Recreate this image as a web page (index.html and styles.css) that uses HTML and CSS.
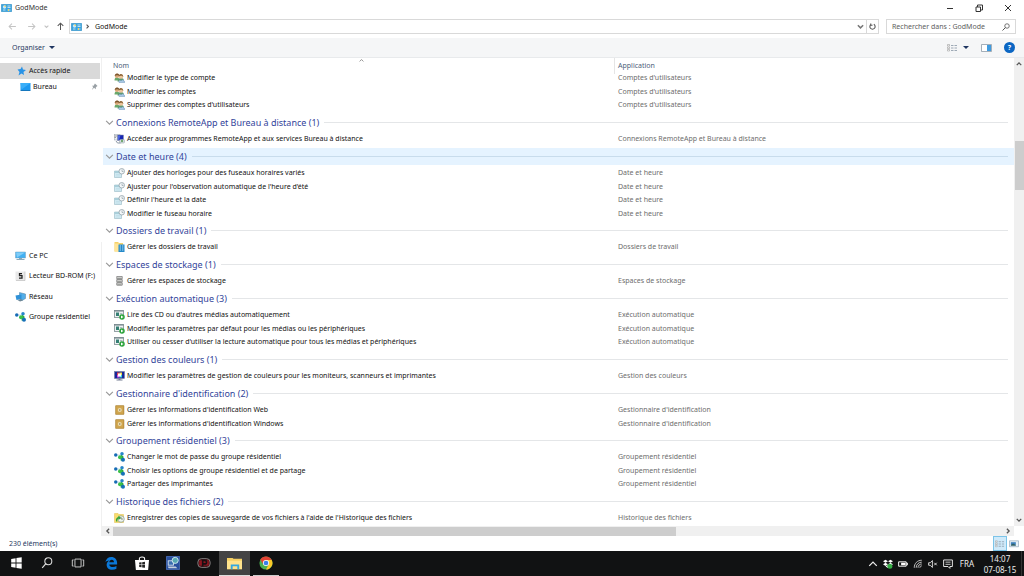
FILE: index.html
```html
<!DOCTYPE html>
<html lang="fr">
<head>
<meta charset="utf-8">
<title>GodMode</title>
<link rel="stylesheet" href="styles.css">
</head>
<body>
<svg class="sprite" aria-hidden="true">
  <symbol id="panel" viewBox="0 0 22 16"><rect x=".5" y=".5" width="21" height="15" rx="1" fill="#3aa3dc" stroke="#2b86bd"/><circle cx="7" cy="6" r="3.500" fill="#c5e8fb"/><path d="M7 6V2.500A3.500 3.500 0 0 1 10.500 6z" fill="#f5d35c"/><path d="M13 4h6M13 7h6M4 12h5M13 12h6" stroke="#e6f6ff" stroke-width="1.500"/><path d="M15 10v4" stroke="#f5d35c" stroke-width="2"/></symbol>
  <symbol id="users" viewBox="0 0 22 20"><path d="M1 15c0-5 2-6 5-6s5 2 5 6z" fill="#6aa86a"/><circle cx="6" cy="5.500" r="4.500" fill="#d9a878"/><path d="M1.500 6c0-6 9-7 9 0-2-2-6-2-9 0z" fill="#7a5530"/><path d="M7 17c0-5 3-7 7-7s6 2 6 7z" fill="#5d9a70"/><circle cx="14" cy="7" r="4.500" fill="#ecc59b"/><path d="M9.500 7c0-7 9-7 9 1-2-3-6-3-9-1z" fill="#8a6235"/><path d="M10 19c-2-4 3-6 4-3 2-4 7-2 6 1 3 0 3 2 1 2z" fill="#a9c9e6" stroke="#7297b8"/></symbol>
  <symbol id="remote" viewBox="0 0 22 20"><rect x="1" y="1" width="11" height="11" fill="#e9edf2" stroke="#9ba4ae"/><path d="M1 4h5M1 7h3" stroke="#555"/><rect x="7" y="2" width="12" height="11" fill="#1725b4" stroke="#8a93a3"/><path d="M8 3h5l-3 9H8z" fill="#4b66e0"/><rect x="11" y="11" width="10" height="7" rx="2" fill="#dce3ea" stroke="#8c98a5"/><path d="M4 14l3 4 6 0" stroke="#8c98a5" fill="none" stroke-width="2"/><circle cx="16" cy="14" r="2.500" fill="#74a873"/></symbol>
  <symbol id="clock" viewBox="0 0 22 20"><path d="M1 6h14v13H1z" fill="#cfe8f1" stroke="#86acba"/><path d="M1 6h14v4H1z" fill="#a9ced9"/><path d="M4 13h8M4 16h8" stroke="#b7d8e2"/><circle cx="15.500" cy="6.500" r="5.500" fill="#f3f7f9" stroke="#8f9ea6" stroke-width="1.500"/><path d="M16 3v4h3" stroke="#71818b" fill="none"/></symbol>
  <symbol id="workfolder" viewBox="0 0 22 20"><path d="M1 0h7l2 2h8v17H1z" fill="#f5d268"/><path d="M1 3h9v16H1z" fill="#ffe599"/><rect x="9" y="5" width="12" height="15" fill="#2489c9"/><path d="M12.500 7v11M17.500 7v11" stroke="#e1f3ff" stroke-width="2" stroke-dasharray="2 2"/></symbol>
  <symbol id="storage" viewBox="0 0 22 22"><path d="M5 1h12v20H5z" fill="#b6b6b4"/><path d="M5 1h12v5H5zM5 8h12v5H5zM5 15h12v5H5z" fill="#d8d8d6" stroke="#777" stroke-width="1.500"/><path d="M7 5h7M7 12h7M7 19h7" stroke="#8d938d" stroke-width="1.500"/></symbol>
  <symbol id="autoplay" viewBox="0 0 22 20"><rect x="1" y="1" width="18" height="14" fill="#eef2f2" stroke="#77858a" stroke-width="1.500"/><path d="M1 2h18" stroke="#6b7c82" stroke-width="2"/><path d="M4 5h6v7H4z" fill="#357f74"/><path d="M12 7h5M12 10h4" stroke="#9aabae" stroke-width="1.500"/><circle cx="16" cy="14" r="5.500" fill="#2ca33c"/><path d="M14 11l5 3-5 3z" fill="#fff"/></symbol>
  <symbol id="colors" viewBox="0 0 22 20"><rect x="1" y="1" width="20" height="14" fill="#17259a" stroke="#6d7894"/><path d="M6 3h5v5H6z" fill="#e94343"/><path d="M11 3h5v5h-5z" fill="#f4df3c"/><path d="M6 8h5v5H6z" fill="#d84ee1"/><path d="M11 8h5v5h-5z" fill="#35d3df"/><path d="M8 5h6v6H8z" fill="#fff"/><path d="M9 15h4v2h4v2H5v-2h4z" fill="#777f94"/></symbol>
  <symbol id="vault" viewBox="0 0 22 20"><rect x="3" y="1" width="17" height="18" rx="1" fill="#c79b45" stroke="#a98338"/><path d="M5 3h13v14H5z" fill="#d0a64f"/><circle cx="11.500" cy="10" r="4" fill="#ecdcb0"/><circle cx="11.500" cy="10" r="1.500" fill="#8c7648"/></symbol>
  <symbol id="homegroup" viewBox="0 0 22 20"><path d="M4 6h12" stroke="#91bddd"/><path d="M14 5l5 4v8h-6z" fill="#2dac3c"/><circle cx="3.500" cy="6" r="3.500" fill="#176bb5"/><circle cx="16" cy="3.500" r="3.500" fill="#2585ca"/><circle cx="12" cy="10.500" r="4" fill="#3cc04a"/><circle cx="18" cy="15.500" r="4" fill="#1670b8"/></symbol>
  <symbol id="history" viewBox="0 0 22 20"><path d="M1 1h7l2 2h9v16H1z" fill="#f8dc6d" stroke="#e2bf48"/><circle cx="14" cy="12" r="6.500" fill="#edf3ed" stroke="#8b9b8c" stroke-width="1.500"/><path d="M14 8v4h4" stroke="#697769" fill="none" stroke-width="1.500"/><path d="M4 17c-1-5 1-8 5-9V5l5 5-5 4v-3c-2 1-3 3-2 6z" fill="#35a43a"/></symbol>
  <symbol id="arrow" viewBox="0 0 16 16"><path d="M14 8H2M7 3L2 8l5 5" fill="none" stroke="currentColor" stroke-width="1.800"/></symbol>
  <symbol id="chevron" viewBox="0 0 16 16"><path d="M2 5l6 6 6-6" fill="none" stroke="currentColor" stroke-width="2"/></symbol>
  <symbol id="bold-chevron" viewBox="0 0 16 16"><path d="M2 5l6 6 6-6" fill="none" stroke="currentColor" stroke-width="3.500"/></symbol>
  <symbol id="lens" viewBox="0 0 16 16"><circle cx="10" cy="6" r="4.500" fill="none" stroke="currentColor" stroke-width="1.600"/><path d="M7 9l-6 6" stroke="currentColor" stroke-width="2"/></symbol>
  <symbol id="details" viewBox="0 0 22 16"><path d="M1 1h4v3H1zM1 6h4v3H1zM1 11h4v3H1z" fill="#fff" stroke="#8c8c8c"/><path d="M8 3h5M15 3h5M8 8h5M15 8h5M8 13h5M15 13h5" stroke="#8090a0" stroke-width="1.500"/></symbol>
</svg>

<header class="titlebar">
  <svg class="panel-icon"><use href="#panel"/></svg>
  <h1>GodMode</h1>
  <div class="controls">
    <button aria-label="Réduire"><svg viewBox="0 0 10 10"><path d="M2 5.500h6" stroke="currentColor"/></svg></button>
    <button aria-label="Restaurer"><svg viewBox="0 0 10 10"><path d="M2 4h4.500v4.500H2zM3.500 4V2H8.500v5H6.500" fill="none" stroke="currentColor"/></svg></button>
    <button aria-label="Fermer"><svg viewBox="0 0 10 10"><path d="M2 2l6 6M8 2l-6 6" stroke="currentColor"/></svg></button>
  </div>
</header>

<div class="navbar">
  <button class="nav-button faded" aria-label="Précédent"><svg><use href="#arrow"/></svg></button>
  <button class="nav-button faded forward" aria-label="Suivant"><svg><use href="#arrow"/></svg></button>
  <button class="nav-button faded small" aria-label="Emplacements récents"><svg><use href="#bold-chevron"/></svg></button>
  <button class="nav-button up" aria-label="Dossier parent"><svg><use href="#arrow"/></svg></button>
  <div class="address">
    <svg class="panel-icon"><use href="#panel"/></svg>
    <svg class="crumb"><use href="#bold-chevron"/></svg>
    <span class="path">GodMode</span>
    <button aria-label="Historique des adresses"><svg><use href="#bold-chevron"/></svg></button>
    <button class="refresh" aria-label="Actualiser"><svg viewBox="0 0 16 16"><path d="M5 3a6 6 0 1 0 6 0M4 1v4h4" fill="none" stroke="currentColor" stroke-width="2.500"/></svg></button>
  </div>
  <div class="search">
    <input type="text" aria-label="Rechercher" placeholder="Rechercher dans : GodMode">
    <svg><use href="#lens"/></svg>
  </div>
</div>

<div class="toolbar">
  <button class="organize">Organiser <span class="caret"></span></button>
  <div class="tools">
    <button class="views" aria-label="Affichage"><svg><use href="#details"/></svg><span class="caret"></span></button>
    <button class="pane" aria-label="Volet de visualisation"><svg viewBox="0 0 22 16"><path d="M1 1h20v14H1z" fill="#fff" stroke="#8796a3" stroke-width="1.500"/><path d="M12 2h8v12h-8z" fill="#3f9be0"/></svg></button>
    <button class="help" aria-label="Aide">?</button>
  </div>
</div>

<div class="main">
  <nav class="side">
    <ul class="quick">
      <li><a href="#" class="selected"><svg viewBox="0 0 20 20"><path d="M11 1l2 6 6 1-5 4 1 6-5-3-6 4 2-7-4-5 6-1z" fill="#2993e6"/></svg>Accès rapide</a></li>
      <li><a href="#" class="child"><svg viewBox="0 0 22 18"><path d="M1 1h20v14H1z" fill="#1c98f0"/><path d="M1 15h20v2H1z" fill="#1577bd"/><path d="M1 1h20L3 14z" fill="#3aaef8"/></svg>Bureau
        <svg class="pin" viewBox="0 0 16 16"><path d="M9 1l6 6-2 1-2 2 0 4-4-3-5 5 3-7-3-3h4l2-3z" fill="#99a0a5"/></svg></a></li>
    </ul>
    <ul class="places">
      <li><a href="#"><svg viewBox="0 0 22 20"><path d="M1 2h20v12H1z" fill="#42b0f2" stroke="#77a3bf"/><path d="M2 3h18L4 13z" fill="#80cdf8"/><path d="M8 14h6v2h5v2H3v-2h5z" fill="#8baabb"/></svg>Ce PC</a></li>
      <li><a href="#"><svg viewBox="0 0 22 20"><path d="M1 1h19v18H1z" fill="#e9e9e9"/><path d="M20 1v18H2" fill="none" stroke="#aaa"/><path d="M14 5H9v4h5v5H8" fill="none" stroke="#222" stroke-width="2.500"/></svg>Lecteur BD-ROM (F:)</a></li>
      <li><a href="#"><svg viewBox="0 0 22 20"><path d="M9 1l12 3v9l-7 4-5-4z" fill="#54aee8" stroke="#527f9c"/><path d="M1 7l12-2v9L3 16z" fill="#2f91d7"/><path d="M5 16l7-2 4 3-6 2z" fill="#6d8796"/></svg>Réseau</a></li>
      <li><a href="#"><svg><use href="#homegroup"/></svg>Groupe résidentiel</a></li>
    </ul>
  </nav>

  <div class="content">
    <div class="list">
      <svg class="sort"><use href="#chevron"/></svg>
      <table>
        <thead><tr><th class="name">Nom</th><th class="app">Application</th></tr></thead>
        <tbody>
          <tr><td><svg><use href="#users"/></svg>Modifier le type de compte</td><td>Comptes d'utilisateurs</td></tr>
          <tr><td><svg><use href="#users"/></svg>Modifier les comptes</td><td>Comptes d'utilisateurs</td></tr>
          <tr><td><svg><use href="#users"/></svg>Supprimer des comptes d'utilisateurs</td><td>Comptes d'utilisateurs</td></tr>
        </tbody>
        <tbody>
          <tr class="group"><th colspan="2"><div><svg><use href="#chevron"/></svg>Connexions RemoteApp et Bureau à distance (1)</div></th></tr>
          <tr><td><svg><use href="#remote"/></svg>Accéder aux programmes RemoteApp et aux services Bureau à distance</td><td>Connexions RemoteApp et Bureau à distance</td></tr>
        </tbody>
        <tbody>
          <tr class="group hover"><th colspan="2"><div><svg><use href="#chevron"/></svg>Date et heure (4)</div></th></tr>
          <tr><td><svg><use href="#clock"/></svg>Ajouter des horloges pour des fuseaux horaires variés</td><td>Date et heure</td></tr>
          <tr><td><svg><use href="#clock"/></svg>Ajuster pour l'observation automatique de l'heure d'été</td><td>Date et heure</td></tr>
          <tr><td><svg><use href="#clock"/></svg>Définir l'heure et la date</td><td>Date et heure</td></tr>
          <tr><td><svg><use href="#clock"/></svg>Modifier le fuseau horaire</td><td>Date et heure</td></tr>
        </tbody>
        <tbody>
          <tr class="group"><th colspan="2"><div><svg><use href="#chevron"/></svg>Dossiers de travail (1)</div></th></tr>
          <tr><td><svg><use href="#workfolder"/></svg>Gérer les dossiers de travail</td><td>Dossiers de travail</td></tr>
        </tbody>
        <tbody>
          <tr class="group"><th colspan="2"><div><svg><use href="#chevron"/></svg>Espaces de stockage (1)</div></th></tr>
          <tr><td><svg><use href="#storage"/></svg>Gérer les espaces de stockage</td><td>Espaces de stockage</td></tr>
        </tbody>
        <tbody>
          <tr class="group"><th colspan="2"><div><svg><use href="#chevron"/></svg>Exécution automatique (3)</div></th></tr>
          <tr><td><svg><use href="#autoplay"/></svg>Lire des CD ou d'autres médias automatiquement</td><td>Exécution automatique</td></tr>
          <tr><td><svg><use href="#autoplay"/></svg>Modifier les paramètres par défaut pour les médias ou les périphériques</td><td>Exécution automatique</td></tr>
          <tr><td><svg><use href="#autoplay"/></svg>Utiliser ou cesser d'utiliser la lecture automatique pour tous les médias et périphériques</td><td>Exécution automatique</td></tr>
        </tbody>
        <tbody>
          <tr class="group"><th colspan="2"><div><svg><use href="#chevron"/></svg>Gestion des couleurs (1)</div></th></tr>
          <tr><td><svg><use href="#colors"/></svg>Modifier les paramètres de gestion de couleurs pour les moniteurs, scanneurs et imprimantes</td><td>Gestion des couleurs</td></tr>
        </tbody>
        <tbody>
          <tr class="group"><th colspan="2"><div><svg><use href="#chevron"/></svg>Gestionnaire d'identification (2)</div></th></tr>
          <tr><td><svg><use href="#vault"/></svg>Gérer les informations d'identification Web</td><td>Gestionnaire d'identification</td></tr>
          <tr><td><svg><use href="#vault"/></svg>Gérer les informations d'identification Windows</td><td>Gestionnaire d'identification</td></tr>
        </tbody>
        <tbody>
          <tr class="group"><th colspan="2"><div><svg><use href="#chevron"/></svg>Groupement résidentiel (3)</div></th></tr>
          <tr><td><svg><use href="#homegroup"/></svg>Changer le mot de passe du groupe résidentiel</td><td>Groupement résidentiel</td></tr>
          <tr><td><svg><use href="#homegroup"/></svg>Choisir les options de groupe résidentiel et de partage</td><td>Groupement résidentiel</td></tr>
          <tr><td><svg><use href="#homegroup"/></svg>Partager des imprimantes</td><td>Groupement résidentiel</td></tr>
        </tbody>
        <tbody>
          <tr class="group"><th colspan="2"><div><svg><use href="#chevron"/></svg>Historique des fichiers (2)</div></th></tr>
          <tr><td><svg><use href="#history"/></svg>Enregistrer des copies de sauvegarde de vos fichiers à l'aide de l'Historique des fichiers</td><td>Historique des fichiers</td></tr>
        </tbody>
      </table>
    </div>
    <div class="vbar"><svg class="flip"><use href="#bold-chevron"/></svg><span class="before"></span><span class="thumb"></span><span class="after"></span><svg><use href="#bold-chevron"/></svg></div>
    <div class="hbar"><svg class="left"><use href="#bold-chevron"/></svg><span class="thumb"></span><span class="after"></span><svg class="right"><use href="#bold-chevron"/></svg></div>
  </div>
</div>

<footer class="status">
  <span>230 élément(s)</span>
  <button class="view active" aria-label="Détails"><svg><use href="#details"/></svg></button>
  <button class="view" aria-label="Grandes icônes"><svg viewBox="0 0 22 16"><path d="M1 1h20v13H1z" fill="#e8f1f8" stroke="#92a7b8" stroke-width="1.500"/><path d="M4 4h11v6H4z" fill="#3e81bd"/><path d="M4 10l5-3 6 3v2H4z" fill="#315f63"/></svg></button>
</footer>

<div class="taskbar">
  <button aria-label="Démarrer"><svg viewBox="0 0 16 16"><path d="M2.500 3.500l5-1v5h-5zM8.500 2.300l6-.8v6h-6zM2.500 8.500h5v5l-5-.8zM8.500 8.500h6v6l-6-.8z" fill="#fff"/></svg></button>
  <button aria-label="Rechercher dans Windows"><svg viewBox="0 0 16 16"><circle cx="9.500" cy="6" r="4" fill="none" stroke="#ddd" stroke-width="1.200"/><path d="M6.500 9L2.500 13.500" stroke="#ddd" stroke-width="1.400"/></svg></button>
  <button aria-label="Affichage des tâches"><svg viewBox="0 0 16 16"><path d="M4.500 3.500h7v9h-7zM3 4.500H1.500v7H3M13 4.500h1.500v7H13" fill="none" stroke="#ddd"/></svg></button>
  <button class="edge" aria-label="Edge"><svg viewBox="0 0 16 16"><path d="M1.500 7C2.500 2.800 5 1 8.300 1 12.500 1 15 4 15 8v1.600H6c.2 2 2 3 4.200 3 1.500 0 2.800-.4 4-1.100v3C13 15.300 11.400 15.700 9.500 15.700 5.500 15.700 3 13.500 3 10c0-2.200 1.200-4 3.300-5C3.900 5.100 2.500 5.800 1.500 7zM6 7h5.400c0-1.700-.8-2.800-2.500-2.800S6.300 5.300 6 7z" fill="#0b78d8"/></svg></button>
  <button aria-label="Windows Store"><svg viewBox="0 0 16 16"><path d="M0 4.500h16L15 16H1z" fill="#fff"/><path d="M5 5V3c0-2.500 6-2.500 6 0v2" fill="none" stroke="#fff" stroke-width="1.200"/><path d="M4.800 7.500l2.700-.4v2.500H4.800zM8.200 7l3.200-.5v3.100H8.200zM4.800 10.300h2.700v2.600l-2.700-.4zM8.200 10.300h3.200v3.100L8.200 13z" fill="#222"/></svg></button>
  <button aria-label="Connexion réseau"><svg viewBox="0 0 16 16"><path d="M.5.500h15v15H.5z" fill="#284f9d" stroke="#496fba"/><path d="M2 5h7v6H2z" fill="#dce6ef"/><path d="M3 6h5v4H3z" fill="#3a6db0"/><circle cx="10.500" cy="5" r="3.500" fill="#58a9b3" stroke="#d8eef2"/><path d="M2 12h9l2 2H3z" fill="#c6d0db"/></svg></button>
  <button aria-label="Lecteur P"><svg viewBox="0 0 16 16"><rect x="1" y="3" width="14" height="10" rx="4" fill="#3a1014" stroke="#8e8e8e"/><path d="M2.500 5h11v6h-11z" fill="#8d1620"/><path d="M6.500 12V5h2.200c3 0 3 4 0 4H7" fill="none" stroke="#161012" stroke-width="1.800"/></svg></button>
  <button class="current" aria-label="Explorateur de fichiers"><svg viewBox="0 0 16 16"><path d="M0 2h6l1 1h9v11H0z" fill="#f4cf63"/><path d="M0 5h16v9H0z" fill="#ffe38c"/><path d="M4 14V9h9v5h-2v-3H6v3z" fill="#35a8df"/></svg></button>
  <button class="chrome" aria-label="Chrome"><svg viewBox="0 0 16 16"><circle cx="8" cy="8" r="7.500" fill="#4caf50"/><path d="M1.500 4.200A7.500 7.500 0 0 1 14.500 4.500H8L5 9.700z" fill="#e24234"/><path d="M14.500 4.500A7.500 7.500 0 0 1 8 15.500l3-5.700L8 4.500z" fill="#fbc828"/><circle cx="8" cy="8" r="3.500" fill="#fff"/><circle cx="8" cy="8" r="2.700" fill="#3a7fe8"/></svg></button>
  <div class="tray">
    <svg class="flip"><use href="#chevron"/></svg>
    <svg viewBox="0 0 16 16"><path d="M4 1l4 2.500L4 6 0 3.500zM12 1l4 2.500L12 6 8 3.500zM4 6l4 2.500L4 11 0 8.500zM12 6l4 2.500L12 11 8 8.500zM4 12l4-2.500 4 2.500-4 2.500z" fill="#fff"/><circle cx="11" cy="11.500" r="4" fill="#35ad45"/></svg>
    <svg viewBox="0 0 16 16"><path d="M1 4.500h12v7H1zM13 6.500h2v3h-2" fill="none" stroke="#fff" stroke-width="1.500"/><path d="M5 6h7v4H5z" fill="#fff"/></svg>
    <svg viewBox="0 0 16 16"><path d="M2 14C2 7 7 2 14 2M5 14c0-5 4-9 9-9M8 14c0-3.500 2.500-6 6-6M11 14c0-2 1-3 3-3" fill="none" stroke="#ccc" stroke-width="1.500"/></svg>
    <svg viewBox="0 0 16 16"><path d="M1 6h2.500L7 2.500v11L3.500 10H1zM10 6l4 4M14 6l-4 4" fill="none" stroke="#eee" stroke-width="1.400"/></svg>
    <svg viewBox="0 0 16 16"><path d="M1 1.500h14v10.500h-4V15l-3-3H1z" fill="none" stroke="#eee" stroke-width="1.500"/><path d="M4 5h8M4 8.500h8" stroke="#eee" stroke-width="1.300"/></svg>
    <span class="lang">FRA</span>
    <time class="clock">14:07<br>07-08-15</time>
  </div>
</div>
</body>
</html>
```
FILE: styles.css
```css
* { box-sizing: border-box; }

body {
  margin: 0;
  height: 100vh;
  display: flex;
  flex-direction: column;
  overflow: hidden;
  background: #fff;
  color: #111;
  font: 7px/12px "Noto Sans", "Open Sans", sans-serif;
}

svg { display: block; flex: none; }
.sprite { position: absolute; width: 0; height: 0; }

button {
  display: flex;
  align-items: center;
  justify-content: center;
  padding: 0;
  border: 0;
  background: none;
  color: inherit;
  font: inherit;
}

ul { margin: 0; padding: 0; list-style: none; }
a { color: inherit; text-decoration: none; }

.panel-icon { width: 11px; height: 8px; }
.caret {
  border: 3px solid transparent;
  border-top-color: #1e3560;
  border-bottom: 0;
}
.flip { transform: rotate(180deg); }

/* Title bar */
.titlebar {
  display: flex;
  align-items: center;
  height: 15px;
  padding: 0 2px 0 1px;
  gap: 3px;
}
.titlebar h1 { margin: 0; font-size: 7px; font-weight: 400; color: #333; }
.controls { display: flex; margin-left: auto; }
.controls button { width: 29px; height: 13px; color: #333; }
.controls svg { width: 10px; height: 10px; }

/* Address row */
.navbar {
  display: flex;
  align-items: center;
  height: 23px;
  padding: 0 8px 0 3px;
}
.nav-button { width: 19px; height: 14px; color: #555; }
.nav-button svg { width: 9px; height: 9px; }
.faded { color: #c4c4c4; }
.forward svg { transform: rotate(180deg); }
.small { width: 11px; }
.small svg { width: 5px; height: 5px; }
.up { width: 17px; }
.up svg { transform: rotate(90deg); }
.address {
  flex: 1;
  display: flex;
  align-items: center;
  height: 15px;
  border: 1px solid #d9d9d9;
}
.address .panel-icon { margin-left: 1px; }
.crumb { width: 5px; height: 5px; margin: 0 5px 0 3px; transform: rotate(-90deg); color: #555; }
.path { flex: 1; }
.address button { width: 12px; height: 13px; color: #777; }
.address button svg { width: 7px; height: 7px; }
.address .refresh { border-left: 1px solid #d9d9d9; color: #555; }
.search {
  display: flex;
  align-items: center;
  width: 130px;
  height: 15px;
  margin-left: 7px;
  padding: 0 5px 0 5px;
  border: 1px solid #d9d9d9;
}
.search input {
  flex: 1;
  min-width: 0;
  padding: 0;
  border: 0;
  outline: 0;
  background: none;
  font: inherit;
}
.search input::placeholder { color: #606060; }
.search svg { width: 8px; height: 8px; color: #555; }

/* Command bar */
.toolbar {
  display: flex;
  align-items: center;
  justify-content: space-between;
  height: 20px;
  padding: 0 9px 0 12px;
  border-bottom: 1px solid #e8eaec;
  background: #f5f6f7;
  color: #26395f;
}
.organize { gap: 4px; }
.tools { display: flex; gap: 12px; }
.tools .views { gap: 5px; }
.tools svg { width: 11px; height: 8px; }
.help {
  width: 11px;
  height: 11px;
  border-radius: 50%;
  background: #0b66c3;
  color: #fff;
  font-weight: 700;
}

/* Navigation pane */
.main { flex: 1; display: flex; min-height: 0; }
.side { width: 102px; display: flex; flex-direction: column; }
.quick { height: 34px; padding-top: 5px; border-right: 1px solid #f0f0f0; }
.side a { display: flex; align-items: center; white-space: nowrap; }
.side svg { width: 11px; height: 10px; }
.quick a { height: 16px; padding-left: 16px; gap: 2px; }
.quick .selected { margin-right: 1px; background: #d9d9d9; }
.quick .child { padding-left: 20px; height: 15px; }
.side .pin { width: 7px; height: 7px; margin: 0 3px 0 auto; }
.places {
  flex: 1;
  margin-top: 150px;
  padding-top: 3px;
  border-right: 1px solid #f0f0f0;
}
.places a { height: 20px; padding-left: 15px; gap: 3px; }
.places li:nth-child(odd) a { height: 21px; }

/* File list */
.content {
  flex: 1;
  display: grid;
  grid-template: minmax(0, 1fr) 10px / minmax(0, 1fr) 10px;
  min-width: 0;
}
.list { position: relative; overflow: hidden; }
.sort { position: absolute; left: 256px; top: 0; width: 7px; height: 5px; transform: rotate(180deg); color: #555; }
table { width: 100%; border-collapse: collapse; table-layout: fixed; }
th, td { padding: 0; font-weight: 400; text-align: left; white-space: nowrap; }
thead th { height: 13px; line-height: 10px; padding-top: 3px; color: #4c607a; }
thead .name { width: 512px; padding-left: 11px; }
thead .app { position: relative; padding-left: 4px; }
thead .app::before {
  content: "";
  position: absolute;
  left: 0;
  top: 0;
  height: 16px;
  border-left: 1px solid #e5e5e5;
}
td { height: 14px; line-height: 12px; }
td:first-child { padding-left: 25px; }
td:last-child { padding-left: 4px; color: #6d6d6d; }
td svg { float: left; width: 11px; height: 10px; margin: 1px 0 0 -13px; }
tr:not(.group):nth-child(odd) td { height: 13px; }
tbody:first-of-type tr:nth-child(odd) td,
tbody:not(:first-of-type) tr:nth-child(even) td { height: 14px; }
tbody:first-of-type tr:nth-child(even) td { height: 13px; }
.group th { height: 20px; padding: 2px 0 1px 1px; color: #32449a; font-size: 9px; }
.group div { display: flex; align-items: center; height: 17px; padding: 0 6px 0 2px; line-height: 16px; }
.group svg { width: 9px; height: 9px; margin-right: 2px; color: #999; }
.group div::after { content: ""; flex: 1; margin-left: 5px; border-top: 1px solid #e4e6e8; }
.hover div { background: #e5f3ff; }
.hover div::after { border-color: #c8dcec; }

/* Scroll bars */
.vbar, .hbar { display: flex; align-items: center; background: #f0f0f0; color: #555; }
.vbar { flex-direction: column; padding: 3px 0 3px; }
.vbar svg, .hbar svg { width: 6px; height: 6px; }
.vbar .before { flex: 74; }
.vbar .thumb { flex: 49; width: 9px; background: #cdcdcd; }
.vbar .after { flex: 326; }
.hbar { padding: 0 3px 0 3px; }
.hbar .thumb { flex: 562; height: 9px; margin-left: 2px; background: #cdcdcd; }
.hbar .after { flex: 329; }
.left { transform: rotate(90deg); }
.right { transform: rotate(-90deg); }

/* Status bar */
.status {
  display: flex;
  align-items: center;
  height: 15px;
  padding: 0 3px 0 9px;
  color: #26395f;
}
.status span { margin-right: auto; }
.view { width: 14px; height: 15px; }
.view svg { width: 10px; height: 8px; }
.active { border: 1px solid #7cc4e8; background: #cfeafa; }

/* Taskbar */
.taskbar {
  display: flex;
  height: 25px;
  background: #111213;
  color: #eee;
}
.taskbar button { width: 31px; height: 25px; border-bottom: 1px solid transparent; }
.taskbar button svg { width: 14px; height: 14px; }
.taskbar .edge { margin-left: 2px; }
.taskbar .current { background: #444; border-color: #ddd; }
.taskbar .current svg { width: 15px; height: 15px; }
.taskbar .chrome { width: 26px; margin-left: 3px; border-color: #ccc; }
.tray { display: flex; align-items: center; gap: 5px; margin-left: auto; padding-right: 3px; border-right: 1px solid #333; margin-right: 2px; }
.tray svg { width: 10px; height: 10px; }
.lang { margin-left: 2px; font-size: 8px; }
.clock { width: 36px; margin-left: 3px; text-align: center; font-size: 8px; line-height: 11px; }
```
